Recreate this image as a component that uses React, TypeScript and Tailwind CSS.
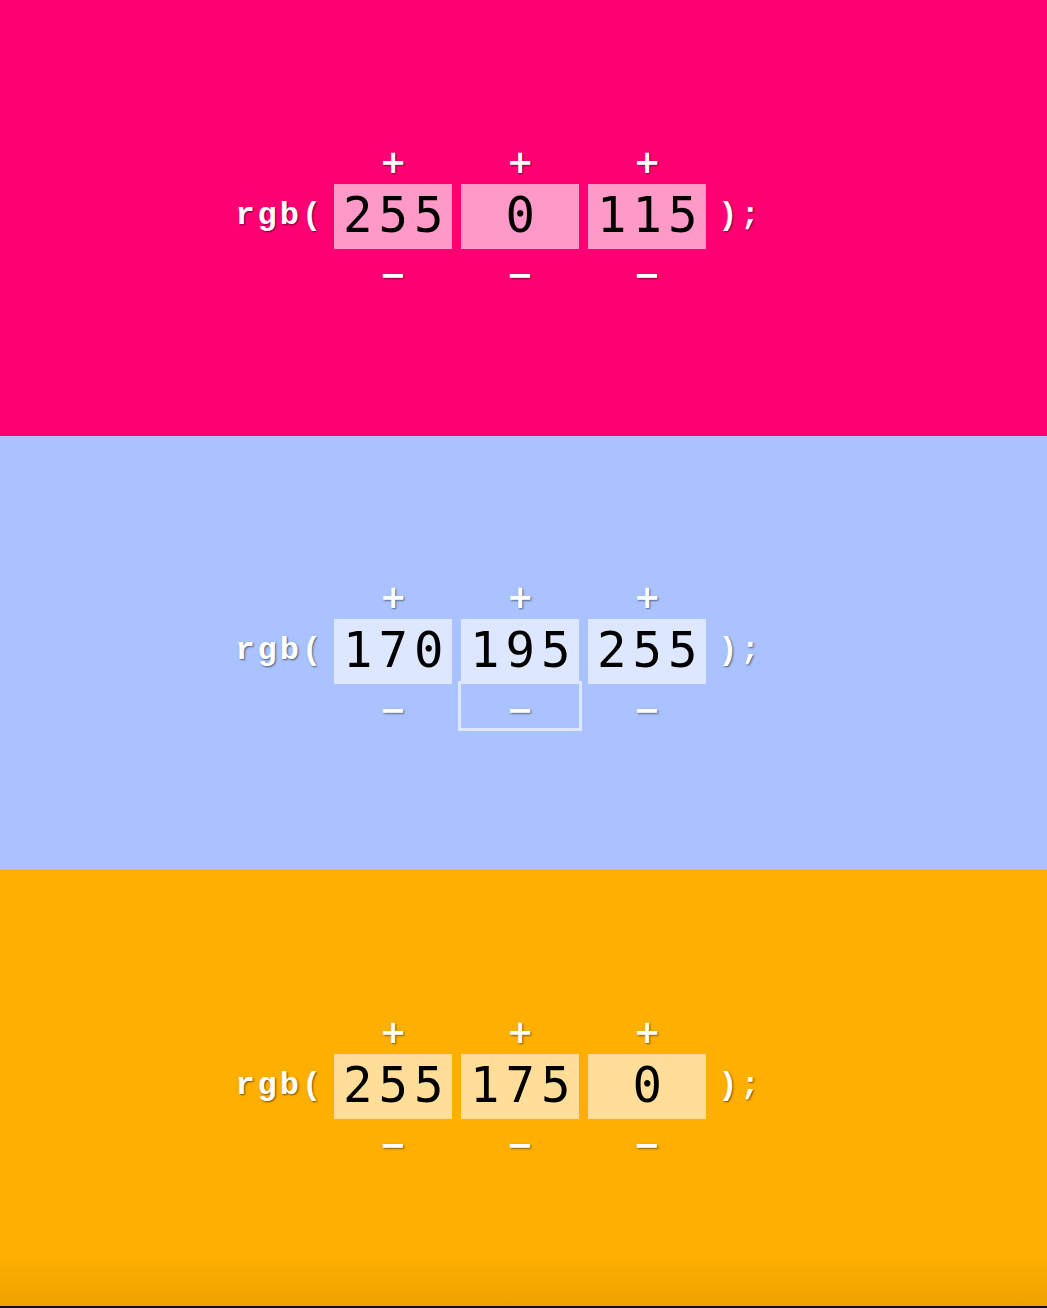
import React from 'react'

interface Channel {
  value: number
}

interface ColorRow {
  id: string
  bg: string
  box: string
  height: string
  channels: Channel[]
  focused?: number
}

const rows: ColorRow[] = [
  {
    id: 'pink',
    bg: 'bg-[#ff0073]',
    box: 'bg-[#ff99c7]',
    height: 'h-[436px]',
    channels: [{ value: 255 }, { value: 0 }, { value: 115 }],
  },
  {
    id: 'blue',
    bg: 'bg-[#aac3ff]',
    box: 'bg-[#dde7ff]',
    height: 'h-[434px]',
    channels: [{ value: 170 }, { value: 195 }, { value: 255 }],
    focused: 1,
  },
  {
    id: 'orange',
    bg: 'bg-linear-to-b from-[#ffaf00] from-88% to-[#eea200]',
    box: 'bg-[#ffde99]',
    height: 'h-[436px]',
    channels: [{ value: 255 }, { value: 175 }, { value: 0 }],
  },
]

const labelClass =
  "text-white font-bold text-[32px] tracking-[3px] font-['Liberation_Mono',monospace] [text-shadow:1px_1px_2px_rgba(0,0,0,0.55)]"

const stepClass =
  "flex h-11 w-[118px] items-center justify-center text-white text-[32px] leading-none font-['DejaVu_Sans',sans-serif] [text-shadow:1px_1px_2px_rgba(0,0,0,0.5)]"

const App: React.FC = () => {
  return (
    <div className="w-full">
      {rows.map(row => (
        <section
          key={row.id}
          className={`flex w-full items-center justify-center pr-[49px] pb-[4px] ${row.height} ${row.bg}`}
        >
          <div className="flex items-center">
            <span className={`${labelClass} mr-[10px]`}>rgb(</span>

            <div className="flex gap-[9px]">
              {row.channels.map((ch, i) => (
                <div key={i} className="flex flex-col items-center">
                  <button className={`${stepClass} pt-[1px] font-bold text-[30px]`}>+</button>
                  <div
                    className={`flex h-[65px] w-[118px] items-center justify-center pl-[6px] text-black text-[49px] tracking-[6px] font-['DejaVu_Sans_Mono',monospace] ${row.box}`}
                  >
                    {ch.value}
                  </div>
                  <button
                    className={`${stepClass} pt-[8px] font-bold ${
                      row.focused === i ? 'outline-3 outline-solid outline-[#dde7ff]' : ''
                    }`}
                  >
                    −
                  </button>
                </div>
              ))}
            </div>

            <span className={`${labelClass} ml-[12px]`}>);</span>
          </div>
        </section>
      ))}
      {/* bottom edge */}
      <div className="h-[2px] w-full bg-[#111]" />
    </div>
  )
}

export default App
